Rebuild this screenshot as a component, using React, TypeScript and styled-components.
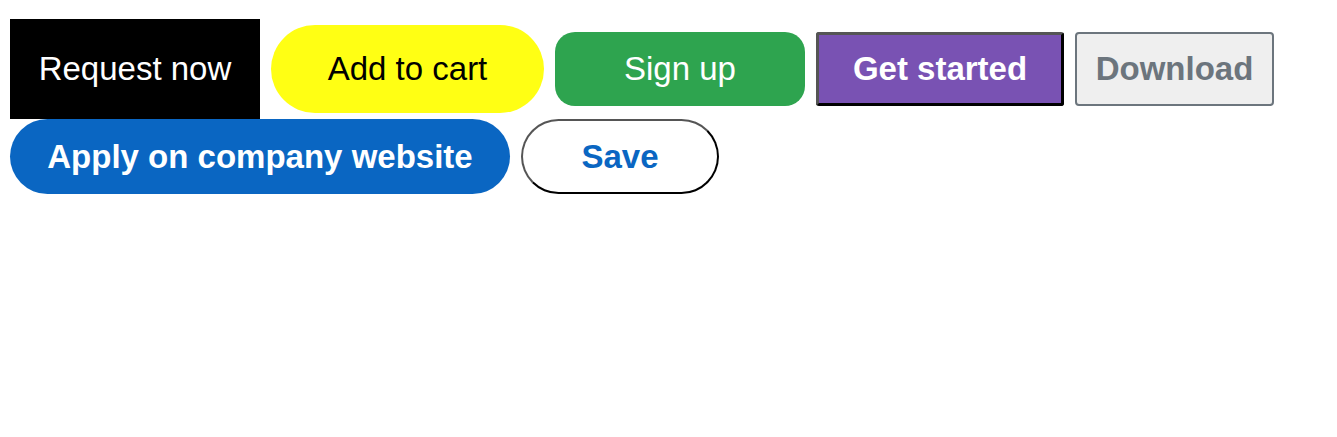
import React from "react";
import styled, { createGlobalStyle, css } from "styled-components";

const Global = createGlobalStyle`
  html, body { margin: 0; padding: 0; background: #fff; }
  body { font-family: "Liberation Sans", Arial, sans-serif; }
`;

const Page = styled.div`
  display: flex;
  flex-direction: column;
  align-items: flex-start;
  padding: 19px 10px 0 10px;
`;

const Row = styled.div`
  display: flex;
  align-items: center;
  gap: 11px;
`;

type Variant = "black" | "yellow" | "green" | "purple" | "gray" | "blue" | "outline";

const variants: Record<Variant, ReturnType<typeof css>> = {
  black: css`
    background: #000;
    color: #fff;
    border: none;
    border-radius: 0;
  `,
  yellow: css`
    background: #ffff14;
    color: #000;
    border: none;
    border-radius: 44px;
  `,
  green: css`
    background: #2ea44f;
    color: #fff;
    border: none;
    border-radius: 20px;
  `,
  purple: css`
    background: #7952b3;
    color: #fff;
    font-weight: 700;
    border: 3px solid;
    border-color: #555 #000 #000 #555;
    border-radius: 3px;
  `,
  gray: css`
    background: #efefef;
    color: #6c757d;
    font-weight: 700;
    border: 2px solid #6c757d;
    border-radius: 4px;
  `,
  blue: css`
    background: #0a66c2;
    color: #fff;
    font-weight: 700;
    border: none;
    border-radius: 38px;
  `,
  outline: css`
    background: #fff;
    color: #0a66c2;
    font-weight: 700;
    border: 2px solid;
    border-color: #555 #000 #000 #555;
    border-radius: 38px;
  `,
};

const Button = styled.button<{ $variant: Variant; $w: number; $h: number }>`
  box-sizing: border-box;
  display: inline-flex;
  align-items: center;
  justify-content: center;
  width: ${(p) => p.$w}px;
  height: ${(p) => p.$h}px;
  padding: 0;
  margin: 0;
  font-family: "Liberation Sans", Arial, sans-serif;
  font-size: 33px;
  font-weight: 400;
  line-height: 1.15;
  cursor: pointer;
  ${(p) => variants[p.$variant]}
`;

export default function App() {
  return (
    <>
      <Global />
      <Page>
        <Row>
          <Button $variant="black" $w={250} $h={100}>Request now</Button>
          <Button $variant="yellow" $w={273} $h={88}>Add to cart</Button>
          <Button $variant="green" $w={250} $h={74}>Sign up</Button>
          <Button $variant="purple" $w={248} $h={74}>Get started</Button>
          <Button $variant="gray" $w={199} $h={74}>Download</Button>
        </Row>
        <Row>
          <Button $variant="blue" $w={500} $h={75}>Apply on company website</Button>
          <Button $variant="outline" $w={198} $h={75}>Save</Button>
        </Row>
      </Page>
    </>
  );
}
